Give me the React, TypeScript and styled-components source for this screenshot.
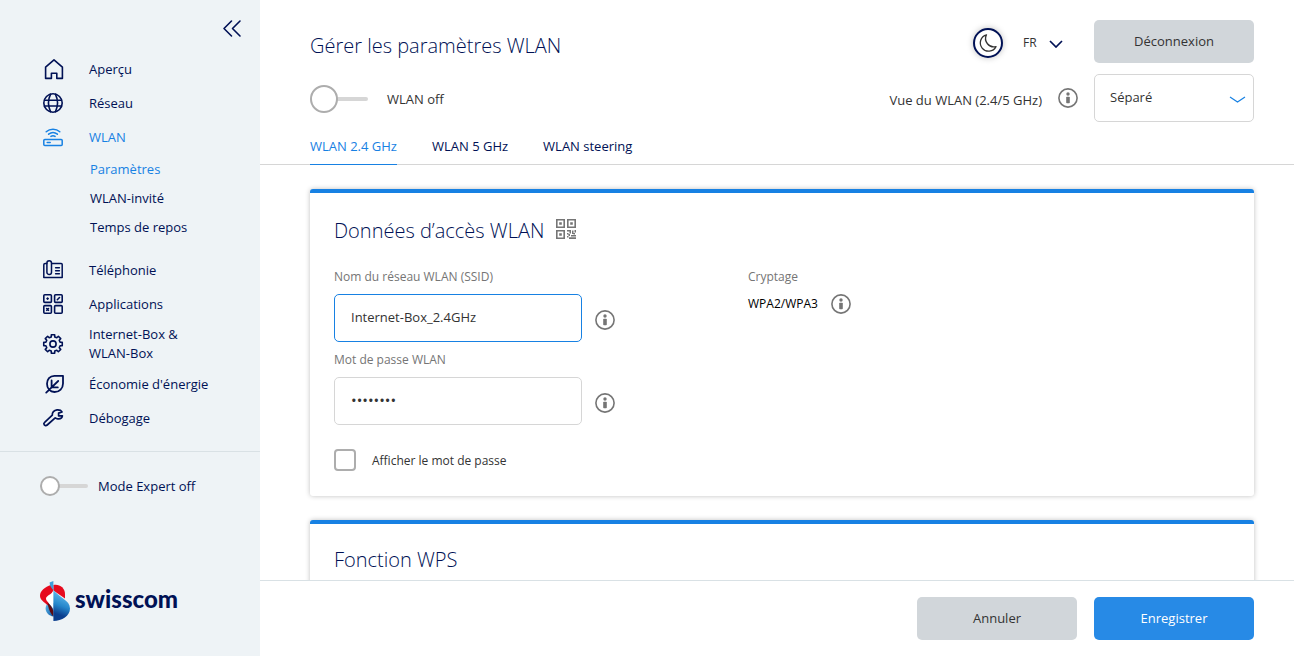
import React, { useState } from 'react';
import styled, { createGlobalStyle, css } from 'styled-components';

const navy = '#001155';
const blue = '#1781e3';
const text = '#333333';
const muted = '#757575';
const line = '#d6d6d6';

const GlobalStyle = createGlobalStyle`
  *, *::before, *::after { box-sizing: border-box; }
  body {
    margin: 0;
    background: #fff;
    color: ${text};
    font: 13px/20px 'Open Sans', 'Noto Sans', sans-serif;
  }
  button, input, select { font: inherit; color: inherit; margin: 0; }
  button { cursor: pointer; }
  svg { display: block; flex: none; }
`;

const Shell = styled.div`
  display: grid;
  grid-template-columns: 260px minmax(0, 1fr);
  height: 100vh;
`;

/* Sidebar */

const Sidebar = styled.aside`
  display: flex;
  flex-direction: column;
  background: #eef3f6;
  color: ${navy};
  overflow: hidden;
`;

const SidebarTop = styled.div`
  display: flex;
  justify-content: flex-end;
  padding: 16px 16px 12px;
`;

const IconButton = styled.button`
  display: grid;
  place-items: center;
  padding: 0;
  border: 0;
  background: none;
  color: ${navy};
`;

const Nav = styled.nav`
  padding-bottom: 16px;
  border-bottom: 1px solid #d9e1e5;
`;

const NavLink = styled.a<{ $active?: boolean }>`
  display: flex;
  align-items: center;
  gap: 24px;
  min-height: 34px;
  padding: 4px 40px 4px 41px;
  line-height: 19px;
  color: ${(p) => (p.$active ? blue : navy)};
  text-decoration: none;
`;

const SubNav = styled.div`
  padding: 1px 0 11px 90px;
`;

const SubLink = styled.a<{ $active?: boolean }>`
  display: block;
  line-height: 29px;
  color: ${(p) => (p.$active ? blue : navy)};
  text-decoration: none;
`;

const ToggleLabel = styled.label<{ $small?: boolean }>`
  display: flex;
  align-items: center;
  gap: ${(p) => (p.$small ? 10 : 19)}px;
  padding-top: ${(p) => (p.$small ? 0 : 2)}px;
`;

const Toggle = styled.input<{ $small?: boolean }>`
  appearance: none;
  display: grid;
  align-items: center;
  flex: none;
  width: ${(p) => (p.$small ? 48 : 58)}px;
  height: ${(p) => (p.$small ? 20 : 28)}px;

  &::before, &::after { content: ''; grid-area: 1 / 1; }
  &::before { height: 4px; border-radius: 2px; background: ${line}; }
  &::after {
    width: ${(p) => (p.$small ? 20 : 28)}px;
    height: ${(p) => (p.$small ? 20 : 28)}px;
    border: 2px solid #adadad;
    border-radius: 50%;
    background: #fff;
  }
  &:checked::before { background: ${blue}; }
  &:checked::after { border-color: ${blue}; justify-self: end; }
`;

const ExpertMode = styled.div`
  padding: 24px 40px;
`;

const Brand = styled.a`
  display: flex;
  align-items: center;
  gap: 5px;
  margin-top: auto;
  padding: 0 40px 35px;
  color: ${navy};
  font: 900 24px/36px Lato, 'Open Sans', sans-serif;
  text-decoration: none;
`;

const BrandName = styled.span`
  padding-bottom: 4px;
`;

/* Main column */

const Main = styled.main`
  display: flex;
  flex-direction: column;
  min-width: 0;
  min-height: 0;
`;

const Header = styled.header`
  padding: 20px 40px 0 50px;
`;

const HeaderRow = styled.div`
  display: flex;
  align-items: center;
  justify-content: space-between;
  & + & { margin-top: 11px; }
`;

const Group = styled.div<{ $gap: number; $top?: number }>`
  display: flex;
  align-items: center;
  gap: ${(p) => p.$gap}px;
  padding-top: ${(p) => p.$top ?? 0}px;
`;

const Title = styled.h1`
  margin: 8px 0 0;
  color: ${navy};
  font-size: 20px;
  font-weight: 300;
  line-height: 28px;
`;

const ThemeButton = styled(IconButton)`
  width: 30px;
  height: 30px;
  border: 2px solid ${navy};
  border-radius: 50%;
  background: #fff;
  color: ${text};
  box-shadow: 0 0 6px rgba(0, 0, 0, 0.25);
`;

const Button = styled.button<{ $primary?: boolean }>`
  width: 160px;
  height: 43px;
  padding: 0 0 2px;
  border: 0;
  border-radius: 5px;
  background: ${(p) => (p.$primary ? '#278ae6' : '#d1d6da')};
  color: ${(p) => (p.$primary ? '#fff' : text)};
  font-weight: 500;
`;

const SelectBox = styled.div<{ $boxed?: boolean }>`
  display: grid;
  align-items: center;
  color: ${(p) => (p.$boxed ? blue : navy)};

  & > * { grid-area: 1 / 1; }
  & > svg { justify-self: end; margin-top: 3px; pointer-events: none; }

  & > select {
    appearance: none;
    width: 40px;
    padding: 0;
    border: 0;
    background: none;
    color: ${text};
    font-size: 12px;
  }

  ${(p) =>
    p.$boxed &&
    css`
      & > svg { margin-right: 8px; }
      & > select {
        width: 160px;
        height: 48px;
        padding: 0 32px 2px 15px;
        border: 1px solid ${line};
        border-radius: 5px;
        background: #fff;
        font-size: 13px;
      }
    `}
`;

const ViewLabel = styled.label`
  padding-top: 3px;
`;

const Tabs = styled.nav`
  display: flex;
  gap: 35px;
  margin-top: 14px;
  padding: 0 40px 0 50px;
  border-bottom: 1px solid ${line};
`;

const Tab = styled.a<{ $active?: boolean }>`
  margin-bottom: -1px;
  padding-bottom: 8px;
  border-bottom: 1px solid ${(p) => (p.$active ? blue : 'transparent')};
  color: ${(p) => (p.$active ? blue : navy)};
  text-decoration: none;
`;

const Content = styled.div`
  flex: 1;
  display: flex;
  flex-direction: column;
  gap: 24px;
  min-height: 0;
  padding: 24px 40px 24px 50px;
  overflow: hidden;
`;

const Card = styled.section`
  flex: none;
  padding: 24px 24px 25px;
  border-top: 4px solid ${blue};
  border-radius: 3px;
  background: #fff;
  box-shadow: 0 0 5px rgba(0, 0, 0, 0.25);
`;

const CardHead = styled.div`
  display: flex;
  align-items: center;
  gap: 12px;
  margin-bottom: 14px;
`;

const CardTitle = styled.h2`
  margin: 0;
  color: ${navy};
  font-size: 20px;
  font-weight: 300;
  line-height: 24px;
`;

const QrButton = styled(IconButton)`
  height: 28px;
  padding-bottom: 4px;
  color: ${muted};
`;

const CardGrid = styled.div`
  display: grid;
  grid-template-columns: 414px minmax(0, 1fr);
`;

const FieldLabel = styled.label`
  display: block;
  padding: 8px 0 7px;
  color: ${muted};
  font-size: 12px;
`;

const FieldRow = styled.div`
  display: flex;
  align-items: center;
  gap: 13px;
`;

const TextField = styled.input<{ $active?: boolean }>`
  width: 248px;
  height: 48px;
  padding: 0 16px 2px;
  border: 1px solid ${(p) => (p.$active ? blue : line)};
  border-radius: 5px;
  background: #fff;
  outline: 0;
  &[type='password'] { font-size: 15px; }
`;

const InfoButton = styled(IconButton)<{ $low?: boolean }>`
  padding-top: ${(p) => (p.$low ? 4 : 0)}px;
  color: ${muted};
`;

const Value = styled.output`
  color: #000;
  font-size: 12px;
`;

const CheckLabel = styled.label`
  display: flex;
  align-items: center;
  gap: 16px;
  margin-top: 24px;
  font-size: 12px;
`;

const CheckText = styled.span`
  padding-top: 2px;
`;

const CheckBox = styled.input`
  appearance: none;
  width: 22px;
  height: 22px;
  border: 2px solid #adadad;
  border-radius: 4px;
  background: #fff;
  &:checked { background: ${blue}; border-color: ${blue}; }
`;

const Footer = styled.footer`
  display: flex;
  justify-content: flex-end;
  gap: 17px;
  padding: 16px 40px;
  border-top: 1px solid #d9e1e5;
  background: #fff;
`;

/* Icons */

const Icon = ({ size = 24, box = 24, stroke = 1.6, children }: {
  size?: number; box?: number; stroke?: number; children: React.ReactNode;
}) => (
  <svg
    width={size}
    height={size}
    viewBox={`0 0 ${box} ${box}`}
    fill="none"
    stroke="currentColor"
    strokeWidth={stroke}
    strokeLinecap="round"
    strokeLinejoin="round"
    aria-hidden="true"
  >
    {children}
  </svg>
);

const HomeIcon = () => (
  <Icon><path d="M4.6 10.2 13 2.8l8.4 7.4v11.2h-5.6v-5.2h-5.4v5.2H4.6z" /></Icon>
);

const GlobeIcon = () => (
  <Icon>
    <circle cx="12" cy="12" r="9.2" />
    <path d="M9.6 3.2C7 8.5 7 15.5 9.6 20.8M14.4 3.2c2.6 5.3 2.6 12.3 0 17.6M3.5 9.200h17M3.5 15h17" />
  </Icon>
);

const RouterIcon = () => (
  <Icon stroke={1.5}>
    <rect x="2.8" y="14.600" width="18.4" height="6" rx="1" />
    <path d="M6.2 17.6h3M5.2 6.8c3.9-3.5 9.700-3.500 13.600 0M7.600 9.200c2.600-2.100 6.200-2.100 8.800 0M9.900 11.400c1.300-.9 2.900-.9 4.200 0" />
  </Icon>
);

const PhoneIcon = () => (
  <Icon stroke={1.5}>
    <rect x="5.9" y="2.7" width="4.6" height="13.800" rx="2.3" />
    <path d="M5.8 5.4H4.2c-.9 0-1.400.6-1.400 1.400v12.700h18.400V6.400c0-.6-.4-1-1-1h-9.600M14.600 9.800h3.800M14.600 12.800h3.800M14.600 15.800h3.800" />
  </Icon>
);

const AppsIcon = () => (
  <Icon>
    <rect x="2.8" y="2.8" width="7.6" height="7.6" rx="1" />
    <rect x="13.6" y="2.8" width="7.6" height="7.6" rx="1" />
    <rect x="2.8" y="13.6" width="7.6" height="7.6" rx="1" />
    <rect x="13.6" y="13.6" width="7.6" height="7.6" rx="1" />
    <path d="M6.600 6v1.200M6 6.600h1.200M16.300 7.700l2.200-2.200M5.700 16.500l1.800 1.800M7.500 16.500l-1.800 1.800" />
  </Icon>
);

const gearPath = (() => {
  const points: string[] = [];
  for (let i = 0; i < 8; i += 1) {
    const mid = (i * Math.PI) / 4;
    [[-0.24, 7.3], [-0.18, 9.4], [0.18, 9.4], [0.24, 7.3]].forEach(([a, r]) => {
      points.push(`${(12 + r * Math.sin(mid + a)).toFixed(2)} ${(12 - r * Math.cos(mid + a)).toFixed(2)}`);
    });
  }
  return `M${points.join('L')}Z`;
})();

const GearIcon = () => (
  <Icon><path d={gearPath} /><circle cx="12" cy="12" r="3.1" /></Icon>
);

const LeafIcon = () => (
  <Icon stroke={1.8}>
    <path d="M22 3.800h-8.600c-4.600 0-7.400 3.400-7.400 8 0 4.700 3 8.200 7.500 8.200 5 0 8.500-3.700 8.500-8.600zM5.200 20.600 17.200 9M10.600 8.500v6.900h6.200" />
  </Icon>
);

const WrenchIcon = () => (
  <Icon stroke={1.7}>
    <path d="M21 5.900l-3.400 1.200v2.700h3.800c-.4 2.200-2.400 3.300-4.600 3-1.100-.1-2-.5-2.600-1L6.200 19c-1 .9-2.400.7-3-.2-.6-.9-.4-1.800.4-2.500l7.700-7.100c-.3-2.700 1.700-5 4.700-5.300 2-.2 4.100.4 5 2z" />
  </Icon>
);

const InfoIcon = () => (
  <Icon size={20} box={20}>
    <circle cx="10" cy="10" r="9.1" />
    <circle cx="10" cy="6" r="1.700" fill="currentColor" stroke="none" />
    <rect x="8.200" y="8.800" width="3.600" height="6.400" rx=".8" fill="currentColor" stroke="none" />
  </Icon>
);

const QrIcon = () => (
  <svg width="20" height="20" viewBox="0 0 20 20" fill="currentColor" aria-hidden="true">
    <path
      fillRule="evenodd"
      d="M0 0h9v9H0zM1.600 1.600v5.800h5.800V1.600zM11 0h9v9h-9zM12.600 1.600v5.800h5.800V1.600zM0 11h9v9H0zM1.600 12.600v5.800h5.800v-5.800z"
    />
    <path d="M3.200 3.200h2.600v2.600H3.200zM14.200 3.200h2.600v2.600h-2.600zM3.200 14.200h2.600v2.600H3.200z" />
    <path d="M11 11h4v1.500h-4zM13.500 12.500H15v2h-1.500zM11 14h1.500v1.500H11zM12.500 15H14v2h-1.500zM16 11.500h1.500V15H16zM17.500 14H19v1.500h-1.500zM18.500 11H20v2.500h-1.500zM15 16h5v1.500h-5zM13 18.300h7V20h-7zM11 17h1.500v1.500H11z" />
  </svg>
);

const Chevron = ({ width, height, stroke }: { width: number; height: number; stroke: number }) => (
  <svg width={width} height={height} viewBox={`0 0 ${width} ${height}`} fill="none" stroke="currentColor" strokeWidth={stroke} aria-hidden="true">
    <path d={`M1 1 ${width / 2} ${height - 1}  ${width - 1} 1`} />
  </svg>
);

const BrandMark = () => (
  <svg width="30" height="40" viewBox="0 0 30 40" aria-hidden="true">
    <defs>
      <linearGradient id="sail" x1="0.5" y1="0" x2="0.3" y2="1">
        <stop offset="0.1" stopColor="#5cb8ea" />
        <stop offset="0.5" stopColor="#2586cb" />
        <stop offset="0.8" stopColor="#0b3e8e" />
      </linearGradient>
      <linearGradient id="tail" x1="0" y1="0" x2="1" y2="1">
        <stop offset="0" stopColor="#5cb8ea" />
        <stop offset="1" stopColor="#0f5aa8" />
      </linearGradient>
    </defs>
    <path d="M7 23C5 26 5 30 8 33c1.500 1.400 3 2 5.500 2.600V22z" fill="url(#tail)" />
    <path d="M13.400 4C19 2.600 25 6.500 25 13v4.500L13.400 9.500z" fill="#e60a1e" />
    <path d="M11 4C5 6 0 10 0 14.800 0 19 4 21 8 24.500L13.400 9z" fill="#e60a1e" />
    <path d="M13.400 9C12 14 6.500 14 6 17.500c-.2 3 5 5.500 7.400 11z" fill="#fff" />
    <path d="M7.500 21.500c1 5.500 2 10 5.900 13.900V30C12 26 10 23.500 7.500 21.500z" fill="#5d0a10" />
    <path d="M9.600 1.500 13.400 0v9.500C11.500 7 9.600 4.500 9.600 1.500z" fill="#3d9fdb" />
    <path d="M13.400 9C19 16.500 30 19 30 27.500 30 35 22 40 13.400 40z" fill="url(#sail)" />
  </svg>
);

/* Page */

const mainItems = [
  { label: 'Aperçu', icon: <HomeIcon /> },
  { label: 'Réseau', icon: <GlobeIcon /> },
  { label: 'WLAN', icon: <RouterIcon />, active: true, children: ['Paramètres', 'WLAN-invité', 'Temps de repos'] },
  { label: 'Téléphonie', icon: <PhoneIcon /> },
  { label: 'Applications', icon: <AppsIcon /> },
  { label: 'Internet-Box & WLAN-Box', icon: <GearIcon /> },
  { label: "Économie d'énergie", icon: <LeafIcon /> },
  { label: 'Débogage', icon: <WrenchIcon /> },
];

const tabs = ['WLAN 2.4 GHz', 'WLAN 5 GHz', 'WLAN steering'];

export default function App() {
  const [tab, setTab] = useState(0);
  const [ssid, setSsid] = useState('Internet-Box_2.4GHz');
  const [password, setPassword] = useState('password');
  const [visible, setVisible] = useState(false);

  return (
    <>
      <GlobalStyle />
      <Shell>
        <Sidebar>
          <SidebarTop>
            <IconButton type="button" aria-label="Réduire le menu">
              <Icon><path d="M11.500 5 4 12.500l7.500 7.500M20 5l-7.500 7.500L20 20" /></Icon>
            </IconButton>
          </SidebarTop>
          <Nav>
            {mainItems.map((item) => (
              <React.Fragment key={item.label}>
                <NavLink href="#" $active={item.active}>
                  {item.icon}
                  <span>{item.label}</span>
                </NavLink>
                {item.children && (
                  <SubNav>
                    {item.children.map((child, i) => (
                      <SubLink key={child} href="#" $active={i === 0}>{child}</SubLink>
                    ))}
                  </SubNav>
                )}
              </React.Fragment>
            ))}
          </Nav>
          <ExpertMode>
            <ToggleLabel $small>
              <Toggle type="checkbox" role="switch" $small />
              Mode Expert off
            </ToggleLabel>
          </ExpertMode>
          <Brand href="#">
            <BrandMark />
            <BrandName>swisscom</BrandName>
          </Brand>
        </Sidebar>

        <Main>
          <Header>
            <HeaderRow>
              <Title>Gérer les paramètres WLAN</Title>
              <Group $gap={31}>
                <Group $gap={20} $top={2}>
                  <ThemeButton type="button" aria-label="Mode sombre">
                    <Icon size={20} box={20} stroke={1.3}>
                      <path d="M8.500 1.800A8.300 8.300 0 1 0 18 13.600 8.300 8.300 0 0 1 8.500 1.800z" />
                    </Icon>
                  </ThemeButton>
                  <SelectBox>
                    <select aria-label="Langue" defaultValue="FR">
                      <option>DE</option>
                      <option>FR</option>
                      <option>IT</option>
                      <option>EN</option>
                    </select>
                    <Chevron width={14} height={8} stroke={1.7} />
                  </SelectBox>
                </Group>
                <Button type="button">Déconnexion</Button>
              </Group>
            </HeaderRow>
            <HeaderRow>
              <ToggleLabel>
                <Toggle type="checkbox" role="switch" />
                WLAN off
              </ToggleLabel>
              <Group $gap={16}>
                <ViewLabel htmlFor="view">Vue du WLAN (2.4/5 GHz)</ViewLabel>
                <InfoButton type="button" aria-label="Info vue du WLAN"><InfoIcon /></InfoButton>
                <SelectBox $boxed>
                  <select id="view" defaultValue="Séparé">
                    <option>Séparé</option>
                    <option>Combiné</option>
                  </select>
                  <Chevron width={17} height={7} stroke={1.2} />
                </SelectBox>
              </Group>
            </HeaderRow>
          </Header>

          <Tabs>
            {tabs.map((label, i) => (
              <Tab key={label} href="#" $active={i === tab} onClick={() => setTab(i)}>{label}</Tab>
            ))}
          </Tabs>

          <Content>
            <Card>
              <CardHead>
                <CardTitle>Données d’accès WLAN</CardTitle>
                <QrButton type="button" aria-label="Code QR"><QrIcon /></QrButton>
              </CardHead>
              <CardGrid>
                <div>
                  <FieldLabel htmlFor="ssid">Nom du réseau WLAN (SSID)</FieldLabel>
                  <FieldRow>
                    <TextField id="ssid" $active value={ssid} onChange={(e) => setSsid(e.target.value)} />
                    <InfoButton type="button" $low aria-label="Info SSID"><InfoIcon /></InfoButton>
                  </FieldRow>
                  <FieldLabel htmlFor="password">Mot de passe WLAN</FieldLabel>
                  <FieldRow>
                    <TextField
                      id="password"
                      type={visible ? 'text' : 'password'}
                      value={password}
                      onChange={(e) => setPassword(e.target.value)}
                    />
                    <InfoButton type="button" $low aria-label="Info mot de passe"><InfoIcon /></InfoButton>
                  </FieldRow>
                  <CheckLabel>
                    <CheckBox type="checkbox" checked={visible} onChange={(e) => setVisible(e.target.checked)} />
                    <CheckText>Afficher le mot de passe</CheckText>
                  </CheckLabel>
                </div>
                <div>
                  <FieldLabel htmlFor="encryption">Cryptage</FieldLabel>
                  <FieldRow>
                    <Value id="encryption">WPA2/WPA3</Value>
                    <InfoButton type="button" aria-label="Info cryptage"><InfoIcon /></InfoButton>
                  </FieldRow>
                </div>
              </CardGrid>
            </Card>
            <Card>
              <CardHead>
                <CardTitle>Fonction WPS</CardTitle>
              </CardHead>
            </Card>
          </Content>

          <Footer>
            <Button type="button">Annuler</Button>
            <Button type="button" $primary>Enregistrer</Button>
          </Footer>
        </Main>
      </Shell>
    </>
  );
}
